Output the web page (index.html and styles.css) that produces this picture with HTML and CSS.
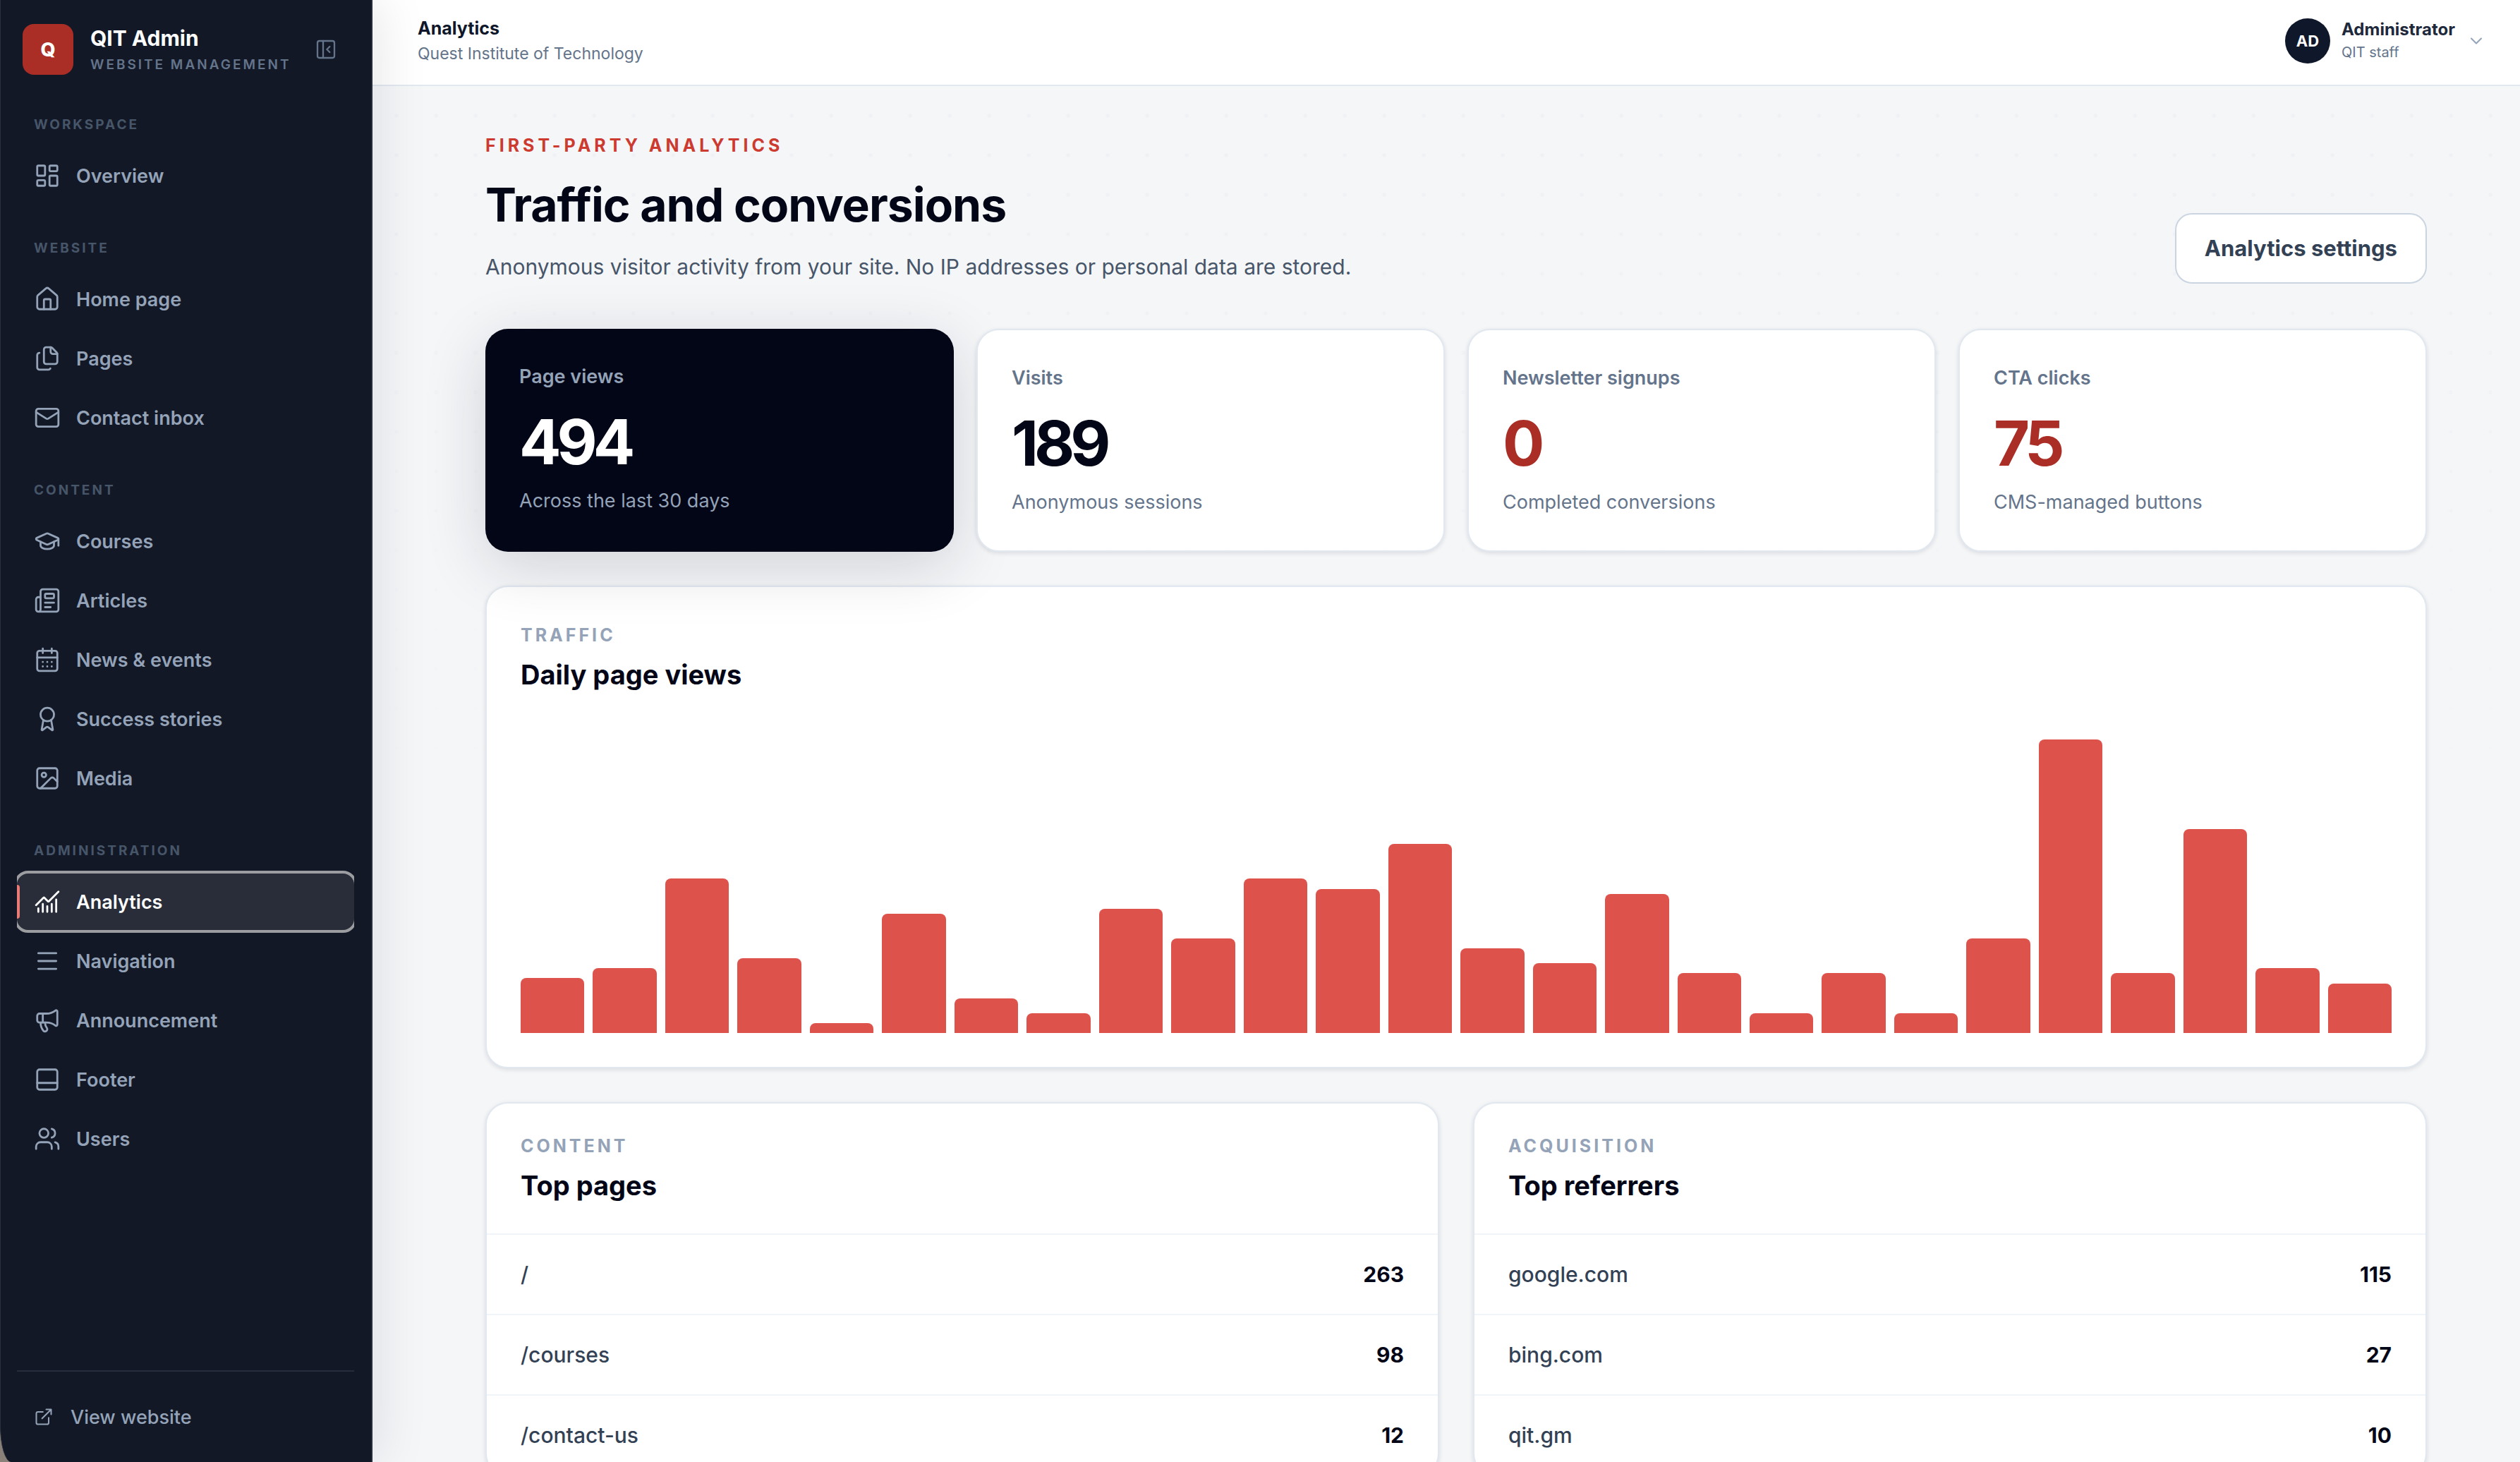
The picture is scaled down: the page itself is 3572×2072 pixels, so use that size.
FILE: index.html
```html
<!DOCTYPE html>
<html lang="en">
<head>
    <meta charset="utf-8"/>
    <meta name="viewport" content="width=device-width, initial-scale=1">
    <title>Analytics - QIT Admin</title>
    <link rel="stylesheet" href="styles.css">
</head>
<body>
    <div class="app">
        <!-- Sidebar -->
        <aside class="sidebar">
            <div class="brand">
                <span class="brand-mark">Q</span>
                <div class="brand-text">
                    <strong>QIT Admin</strong>
                    <span>Website management</span>
                </div>
                <button type="button" class="collapse-btn" aria-label="Collapse sidebar">
                    <svg class="icon" viewBox="0 0 24 24"><rect x="3" y="3" width="18" height="18" rx="2"/><path d="M9 3v18M16 15l-3-3 3-3"/></svg>
                </button>
            </div>

            <nav class="nav">
                <div class="nav-group">
                    <h2 class="nav-label">Workspace</h2>
                    <a href="#" class="nav-item">
                        <svg class="icon" viewBox="0 0 24 24"><rect x="3" y="3" width="7" height="9" rx="1"/><rect x="14" y="3" width="7" height="5" rx="1"/><rect x="14" y="12" width="7" height="9" rx="1"/><rect x="3" y="16" width="7" height="5" rx="1"/></svg>
                        Overview
                    </a>
                </div>
                <div class="nav-group">
                    <h2 class="nav-label">Website</h2>
                    <a href="#" class="nav-item">
                        <svg class="icon" viewBox="0 0 24 24"><path d="M15 21v-8a1 1 0 0 0-1-1h-4a1 1 0 0 0-1 1v8"/><path d="M3 10a2 2 0 0 1 .709-1.528l7-5.999a2 2 0 0 1 2.582 0l7 5.999A2 2 0 0 1 21 10v9a2 2 0 0 1-2 2H5a2 2 0 0 1-2-2z"/></svg>
                        Home page
                    </a>
                    <a href="#" class="nav-item">
                        <svg class="icon" viewBox="0 0 24 24"><path d="M15 2a2 2 0 0 1 1.414.586l4 4A2 2 0 0 1 21 8v7a2 2 0 0 1-2 2h-8a2 2 0 0 1-2-2V4a2 2 0 0 1 2-2z"/><path d="M15 2v4a2 2 0 0 0 2 2h4"/><path d="M5 7a2 2 0 0 0-2 2v11a2 2 0 0 0 2 2h8a2 2 0 0 0 1.732-1"/></svg>
                        Pages
                    </a>
                    <a href="#" class="nav-item">
                        <svg class="icon" viewBox="0 0 24 24"><rect x="2" y="4" width="20" height="16" rx="2"/><path d="m22 7-8.991 5.727a2 2 0 0 1-2.009 0L2 7"/></svg>
                        Contact inbox
                    </a>
                </div>
                <div class="nav-group">
                    <h2 class="nav-label">Content</h2>
                    <a href="#" class="nav-item">
                        <svg class="icon" viewBox="0 0 24 24"><path d="M21.42 10.922a1 1 0 0 0-.019-1.838L12.83 5.18a2 2 0 0 0-1.66 0L2.6 9.08a1 1 0 0 0 0 1.832l8.57 3.908a2 2 0 0 0 1.66 0z"/><path d="M22 10v6"/><path d="M6 12.5V16a6 3 0 0 0 12 0v-3.5"/></svg>
                        Courses
                    </a>
                    <a href="#" class="nav-item">
                        <svg class="icon" viewBox="0 0 24 24"><path d="M15 18h-5M18 14h-8"/><path d="M4 22h16a2 2 0 0 0 2-2V4a2 2 0 0 0-2-2H8a2 2 0 0 0-2 2v16a2 2 0 0 1-4 0v-9a2 2 0 0 1 2-2h2"/><rect x="10" y="6" width="8" height="4" rx="1"/></svg>
                        Articles
                    </a>
                    <a href="#" class="nav-item">
                        <svg class="icon" viewBox="0 0 24 24"><path d="M8 2v4M16 2v4M3 10h18"/><rect x="3" y="4" width="18" height="18" rx="2"/><path d="M8 14h.01M12 14h.01M16 14h.01M8 18h.01M12 18h.01M16 18h.01"/></svg>
                        News &amp; events
                    </a>
                    <a href="#" class="nav-item">
                        <svg class="icon" viewBox="0 0 24 24"><path d="m15.477 12.89 1.515 8.526a.5.5 0 0 1-.81.47l-3.58-2.687a1 1 0 0 0-1.197 0l-3.586 2.686a.5.5 0 0 1-.81-.469l1.514-8.526"/><circle cx="12" cy="8" r="6"/></svg>
                        Success stories
                    </a>
                    <a href="#" class="nav-item">
                        <svg class="icon" viewBox="0 0 24 24"><rect x="3" y="3" width="18" height="18" rx="2"/><circle cx="9" cy="9" r="2"/><path d="m21 15-3.086-3.086a2 2 0 0 0-2.828 0L6 21"/></svg>
                        Media
                    </a>
                </div>
                <div class="nav-group">
                    <h2 class="nav-label">Administration</h2>
                    <a href="#" class="nav-item active" aria-current="page">
                        <svg class="icon" viewBox="0 0 24 24"><path d="M12 16v5M16 14v7M20 10v11M4 18v3M8 14v7"/><path d="m22 3-8.646 8.646a.5.5 0 0 1-.708 0L9.354 8.354a.5.5 0 0 0-.707 0L2 15"/></svg>
                        Analytics
                    </a>
                    <a href="#" class="nav-item">
                        <svg class="icon" viewBox="0 0 24 24"><path d="M4 5h16M4 12h16M4 19h16"/></svg>
                        Navigation
                    </a>
                    <a href="#" class="nav-item">
                        <svg class="icon" viewBox="0 0 24 24"><path d="M11 6a13 13 0 0 0 8.4-2.8A1 1 0 0 1 21 4v12a1 1 0 0 1-1.6.8A13 13 0 0 0 11 14H5a2 2 0 0 1-2-2V8a2 2 0 0 1 2-2z"/><path d="M6 14a12 12 0 0 0 2.4 7.2 2 2 0 0 0 3.2-2.4A8 8 0 0 1 10 14M8 6v8"/></svg>
                        Announcement
                    </a>
                    <a href="#" class="nav-item">
                        <svg class="icon" viewBox="0 0 24 24"><rect x="3" y="3" width="18" height="18" rx="2"/><path d="M3 15h18"/></svg>
                        Footer
                    </a>
                    <a href="#" class="nav-item">
                        <svg class="icon" viewBox="0 0 24 24"><path d="M16 21v-2a4 4 0 0 0-4-4H6a4 4 0 0 0-4 4v2"/><path d="M16 3.128a4 4 0 0 1 0 7.744"/><path d="M22 21v-2a4 4 0 0 0-3-3.87"/><circle cx="9" cy="7" r="4"/></svg>
                        Users
                    </a>
                </div>
            </nav>

            <div class="sidebar-footer">
                <a href="#" class="site-link">
                    <svg class="icon" viewBox="0 0 24 24"><path d="M15 3h6v6M10 14 21 3M18 13v6a2 2 0 0 1-2 2H5a2 2 0 0 1-2-2V8a2 2 0 0 1 2-2h6"/></svg>
                    View website
                </a>
            </div>
        </aside>

        <div class="page">
            <!-- Top bar -->
            <header class="topbar">
                <div class="topbar-title">
                    <strong>Analytics</strong>
                    <span>Quest Institute of Technology</span>
                </div>
                <button type="button" class="user-menu">
                    <span class="avatar">AD</span>
                    <span class="user-text">
                        <strong>Administrator</strong>
                        <span>QIT staff</span>
                    </span>
                    <svg class="icon" viewBox="0 0 24 24"><path d="m6 9 6 6 6-6"/></svg>
                </button>
            </header>

            <main class="main">
                <div class="content">
                    <div class="page-head">
                        <div>
                            <p class="eyebrow">First-party analytics</p>
                            <h1>Traffic and conversions</h1>
                            <p class="lead">Anonymous visitor activity from your site. No IP addresses or personal data are stored.</p>
                        </div>
                        <a href="#" class="settings-btn">Analytics settings</a>
                    </div>

                    <section class="stats">
                        <article class="stat stat-dark">
                            <p class="stat-label">Page views</p>
                            <p class="stat-value">494</p>
                            <p class="stat-note">Across the last 30 days</p>
                        </article>
                        <article class="stat">
                            <p class="stat-label">Visits</p>
                            <p class="stat-value">189</p>
                            <p class="stat-note">Anonymous sessions</p>
                        </article>
                        <article class="stat stat-red">
                            <p class="stat-label">Newsletter signups</p>
                            <p class="stat-value">0</p>
                            <p class="stat-note">Completed conversions</p>
                        </article>
                        <article class="stat stat-red">
                            <p class="stat-label">CTA clicks</p>
                            <p class="stat-value">75</p>
                            <p class="stat-note">CMS-managed buttons</p>
                        </article>
                    </section>

                    <section class="card traffic">
                        <p class="card-label">Traffic</p>
                        <h2 class="card-title">Daily page views</h2>
                        <div class="chart" role="img" aria-label="Daily page views">
                            <div class="bar" style="--views: 11"></div>
                            <div class="bar" style="--views: 13"></div>
                            <div class="bar" style="--views: 31"></div>
                            <div class="bar" style="--views: 15"></div>
                            <div class="bar" style="--views: 2"></div>
                            <div class="bar" style="--views: 24"></div>
                            <div class="bar" style="--views: 7"></div>
                            <div class="bar" style="--views: 4"></div>
                            <div class="bar" style="--views: 25"></div>
                            <div class="bar" style="--views: 19"></div>
                            <div class="bar" style="--views: 31"></div>
                            <div class="bar" style="--views: 29"></div>
                            <div class="bar" style="--views: 38"></div>
                            <div class="bar" style="--views: 17"></div>
                            <div class="bar" style="--views: 14"></div>
                            <div class="bar" style="--views: 28"></div>
                            <div class="bar" style="--views: 12"></div>
                            <div class="bar" style="--views: 4"></div>
                            <div class="bar" style="--views: 12"></div>
                            <div class="bar" style="--views: 4"></div>
                            <div class="bar" style="--views: 19"></div>
                            <div class="bar" style="--views: 59"></div>
                            <div class="bar" style="--views: 12"></div>
                            <div class="bar" style="--views: 41"></div>
                            <div class="bar" style="--views: 13"></div>
                            <div class="bar" style="--views: 10"></div>
                        </div>
                    </section>

                    <div class="panels">
                        <section class="card">
                            <div class="panel-head">
                                <p class="card-label">Content</p>
                                <h2 class="card-title" id="top-pages">Top pages</h2>
                            </div>
                            <table class="rank" aria-labelledby="top-pages">
                                <tbody>
                                    <tr><th scope="row">/</th><td>263</td></tr>
                                    <tr><th scope="row">/courses</th><td>98</td></tr>
                                    <tr><th scope="row">/contact-us</th><td>12</td></tr>
                                </tbody>
                            </table>
                        </section>
                        <section class="card">
                            <div class="panel-head">
                                <p class="card-label">Acquisition</p>
                                <h2 class="card-title" id="top-referrers">Top referrers</h2>
                            </div>
                            <table class="rank" aria-labelledby="top-referrers">
                                <tbody>
                                    <tr><th scope="row">google.com</th><td>115</td></tr>
                                    <tr><th scope="row">bing.com</th><td>27</td></tr>
                                    <tr><th scope="row">qit.gm</th><td>10</td></tr>
                                </tbody>
                            </table>
                        </section>
                    </div>
                </div>
            </main>
        </div>
    </div>
</body>
</html>
```
FILE: styles.css
```css
* {
    box-sizing: border-box;
}
body {
    margin: 0;
    font-family: Inter, "Liberation Sans", sans-serif;
    color: #020617;
    background-color: #8d857c;
}
h1, h2, p {
    margin: 0;
}
a {
    color: inherit;
    text-decoration: none;
}
button {
    padding: 0;
    border: none;
    background: none;
    font: inherit;
    color: inherit;
    cursor: pointer;
}
.icon {
    flex: none;
    display: block;
    fill: none;
    stroke: currentColor;
    stroke-width: 1.75;
    stroke-linecap: round;
    stroke-linejoin: round;
}
.app {
    display: flex;
    height: 100vh;
    overflow: hidden;
}

/* Sidebar */
.sidebar {
    position: relative;
    z-index: 2;
    flex: none;
    display: flex;
    flex-direction: column;
    width: 528px;
    padding: 30px 24px 0 23px;
    background-color: #121826;
    border-left: 1px solid #2a303d;
    border-right: 2px solid #252b39;
    border-bottom-left-radius: 16px 52px;
    box-shadow: 8px 0 72px rgba(15, 23, 42, 0.1);
}
.brand {
    display: flex;
    align-items: center;
    padding: 0 24px 0 8px;
}
.brand-mark {
    display: flex;
    align-items: center;
    justify-content: center;
    width: 72px;
    height: 72px;
    margin-right: 24px;
    border-radius: 16px;
    background-color: #aa2e26;
    color: #fff;
    font-size: 27px;
    font-weight: 800;
}
.brand-text {
    display: flex;
    flex-direction: column;
    flex: 1;
    padding-top: 4px;
    color: #fff;
    white-space: nowrap;
}
.brand-text strong {
    font-size: 30px;
    line-height: 40px;
}
.brand-text span {
    font-size: 19px;
    font-weight: 600;
    line-height: 36px;
    letter-spacing: 3px;
    text-transform: uppercase;
    color: #64748b;
}
.collapse-btn {
    color: #64748b;
}
.collapse-btn .icon {
    width: 32px;
    height: 32px;
}
.nav {
    flex: 1;
    display: flex;
    flex-direction: column;
    gap: 48px;
    padding-top: 52px;
    overflow: hidden;
}
.nav-group {
    display: flex;
    flex-direction: column;
    gap: 4px;
}
.nav-label {
    margin-bottom: 13px;
    padding-left: 24px;
    font-size: 19px;
    font-weight: 700;
    line-height: 30px;
    letter-spacing: 3px;
    text-transform: uppercase;
    color: #475569;
}
.nav-item {
    display: flex;
    align-items: center;
    gap: 22px;
    height: 80px;
    padding-left: 24px;
    border-radius: 16px;
    font-size: 27px;
    font-weight: 600;
    color: #94a3b8;
}
.nav-item .icon {
    width: 38px;
    height: 38px;
}
.nav-item:hover {
    color: #fff;
}
.nav-item.active {
    position: relative;
    background-color: #282d39;
    outline: 4px solid #9b9da1;
    color: #fff;
}
.nav-item.active::before {
    content: "";
    position: absolute;
    left: 0;
    top: 16px;
    width: 4px;
    height: 48px;
    border-radius: 0 4px 4px 0;
    background-color: #ea7a74;
}
.sidebar-footer {
    padding: 32px 24px;
    border-top: 2px solid #262c3b;
}
.site-link {
    display: flex;
    align-items: center;
    gap: 24px;
    height: 64px;
    font-size: 27px;
    font-weight: 500;
    color: #94a3b8;
}
.site-link .icon {
    width: 28px;
    height: 28px;
}

/* Top bar */
.page {
    flex: 1;
    min-width: 0;
    display: flex;
    flex-direction: column;
    background-color: #f5f6f8;
}
.topbar {
    flex: none;
    display: flex;
    align-items: center;
    justify-content: space-between;
    height: 122px;
    padding: 0 48px 4px 64px;
    border-bottom: 2px solid #e2e8f0;
    background-color: #fff;
}
.topbar-title,
.user-text {
    display: flex;
    flex-direction: column;
    text-align: left;
}
.topbar-title strong {
    font-size: 25px;
    line-height: 36px;
    color: #0f172a;
}
.topbar-title span {
    font-size: 23px;
    line-height: 36px;
    color: #64748b;
}
.user-menu {
    display: flex;
    align-items: center;
}
.avatar {
    display: flex;
    align-items: center;
    justify-content: center;
    width: 64px;
    height: 64px;
    margin-right: 16px;
    border-radius: 50%;
    background-color: #0f172a;
    color: #fff;
    font-size: 22px;
    font-weight: 700;
}
.user-text strong {
    font-size: 24px;
    line-height: 32px;
    color: #1e293b;
}
.user-text span {
    font-size: 20px;
    line-height: 32px;
    color: #64748b;
}
.user-menu .icon {
    width: 28px;
    height: 28px;
    margin-left: 16px;
    color: #94a3b8;
}

/* Content */
.main {
    flex: 1;
    position: relative;
    padding: 64px 0 64px 28px;
    overflow: hidden;
}
.main::before {
    content: "";
    position: absolute;
    inset: 0;
    background-image: radial-gradient(circle, #eff0f4 2px, transparent 3px);
    background-size: 56px 56px;
    background-position: 6px 14px;
    -webkit-mask-image: linear-gradient(#000, transparent 1000px);
    mask-image: linear-gradient(#000, transparent 1000px);
}
.content {
    position: relative;
    max-width: 2752px;
    margin: 0 auto;
}
.page-head {
    display: flex;
    align-items: flex-end;
    justify-content: space-between;
    margin-bottom: 64px;
}
.eyebrow {
    font-size: 25px;
    font-weight: 700;
    line-height: 40px;
    letter-spacing: 5px;
    text-transform: uppercase;
    color: #cc3a30;
}
h1 {
    margin: 24px 0;
    font-size: 66px;
    font-weight: 700;
    line-height: 80px;
    letter-spacing: -1px;
}
.lead {
    font-size: 30px;
    line-height: 48px;
    color: #475569;
}
.settings-btn {
    padding: 24px 40px;
    border: 2px solid #cbd5e1;
    border-radius: 24px;
    background-color: #fff;
    font-size: 31px;
    font-weight: 700;
    line-height: 48px;
    color: #334155;
}

/* Stat cards */
.stats {
    position: relative;
    z-index: 1;
    display: grid;
    grid-template-columns: repeat(4, 1fr);
    gap: 32px;
    margin-bottom: 48px;
}
.stat,
.card {
    border: 2px solid #e2e8f0;
    border-radius: 32px;
    background-color: #fff;
    box-shadow: 0 2px 6px rgba(15, 23, 42, 0.12);
}
.stat {
    padding: 48px;
}
.stat-label {
    font-size: 27px;
    font-weight: 600;
    line-height: 40px;
    color: #64748b;
}
.stat-value {
    margin: 24px 0 16px;
    font-size: 88px;
    font-weight: 700;
    line-height: 96px;
    letter-spacing: -6px;
}
.stat-note {
    font-size: 27px;
    line-height: 40px;
    color: #64748b;
}
.stat-red .stat-value {
    color: #aa2e26;
}
.stat-dark {
    border: none;
    background-color: #020617;
    box-shadow: 0 20px 88px rgba(15, 23, 42, 0.16);
    color: #fff;
}
.stat-dark .stat-label,
.stat-dark .stat-note {
    color: #94a3b8;
}

/* Chart */
.card-label {
    font-size: 25px;
    font-weight: 700;
    line-height: 40px;
    letter-spacing: 4px;
    text-transform: uppercase;
    color: #94a3b8;
}
.card-title {
    margin-top: 8px;
    font-size: 38px;
    font-weight: 700;
    line-height: 56px;
}
.traffic {
    margin-bottom: 48px;
    padding: 48px;
}
.chart {
    display: flex;
    align-items: flex-end;
    gap: 12px;
    height: 416px;
    margin-top: 64px;
}
.bar {
    flex: 1;
    height: calc(var(--views) / 59 * 100%);
    border-radius: 8px 8px 0 0;
    background-color: #de524c;
}

/* Ranking panels */
.panels {
    display: grid;
    grid-template-columns: 1fr 1fr;
    gap: 48px;
}
.panel-head {
    padding: 40px 48px;
}
.rank {
    width: 100%;
    border-spacing: 0;
}
.rank th,
.rank td {
    padding: 36px 48px;
    border-top: 2px solid #f1f5f9;
    font-size: 30px;
    line-height: 40px;
}
.rank th {
    font-weight: 500;
    text-align: left;
    color: #334155;
}
.rank td {
    font-weight: 700;
    text-align: right;
}
```
